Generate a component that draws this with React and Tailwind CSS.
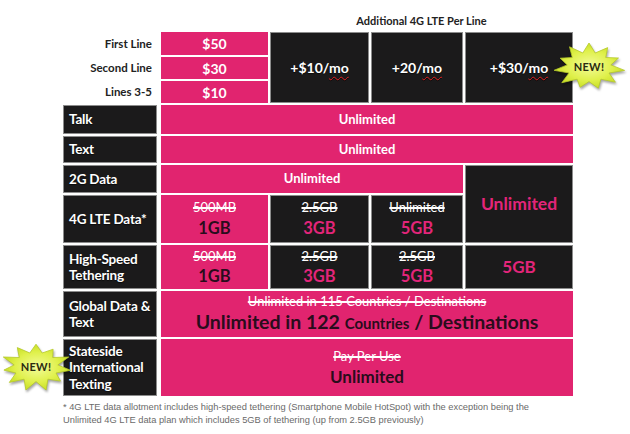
import React from "react";

const PINK = "bg-[#e1246f]";
const BLACK = "bg-[#1b1a1b] border border-[#8c8c8c]";

function starPoints(w, h, n, jit) {
  const cx = w / 2, cy = h / 2;
  const pts = [];
  for (let i = 0; i < n * 2; i++) {
    const a = (Math.PI * i) / n - Math.PI / 2;
    const outer = i % 2 === 0;
    const j = jit[i % jit.length];
    const rx = outer ? (w / 2 - 2) * j : (w / 2) * 0.58;
    const ry = outer ? (h / 2 - 2) * j : (h / 2) * 0.56;
    pts.push(`${(cx + rx * Math.cos(a)).toFixed(1)},${(cy + ry * Math.sin(a)).toFixed(1)}`);
  }
  return pts.join(" ");
}

function Burst({ className, id, jit }) {
  const w = 76, h = 52;
  return (
    <div className={`absolute ${className}`} style={{ width: w, height: h }}>
      <svg width={w} height={h} viewBox={`0 0 ${w} ${h}`} className="absolute inset-0 drop-shadow-[1px_2px_1px_rgba(0,0,0,0.35)]">
        <defs>
          <radialGradient id={id} cx="50%" cy="50%" r="55%">
            <stop offset="0%" stopColor="#f3fb9a" />
            <stop offset="60%" stopColor="#dff04a" />
            <stop offset="100%" stopColor="#c3db1e" />
          </radialGradient>
        </defs>
        <polygon points={starPoints(w, h, 11, jit)} fill={`url(#${id})`} stroke="#b5c92a" strokeWidth="0.8" />
      </svg>
      <div className="absolute inset-0 flex items-center justify-center text-[11px] font-bold text-[#2a2a10] tracking-[0.3px]">
        NEW!
      </div>
    </div>
  );
}

function Strike({ children, className = "" }) {
  return <div className={`line-through decoration-[1.5px] text-white font-normal text-[13px] leading-[15px] ${className}`}>{children}</div>;
}

function Label({ children, row, className = "" }) {
  return (
    <div className={`${BLACK} col-start-1 mr-[2px] flex items-center px-[5px] text-white font-bold text-[13.5px] tracking-[-0.2px] whitespace-nowrap leading-[16.5px] [text-shadow:0_1px_1px_rgba(0,0,0,0.6)] ${row} ${className}`}>
      <div>{children}</div>
    </div>
  );
}

function Mo({ pre }) {
  return (
    <span className="text-white font-bold text-[14px] [text-shadow:0_1px_1px_rgba(0,0,0,0.6)]">
      {pre}/<span className="underline decoration-wavy decoration-[#e02020] decoration-[1px] underline-offset-[3px]">mo</span>
    </span>
  );
}

export default function App() {
  return (
    <div className="relative w-[630px] h-[434px] bg-white overflow-hidden font-['Lato','Liberation_Sans',sans-serif]">
      <div className="pt-[12px] pl-[63px]">
        <div className="grid grid-cols-[96px_107px_99px_92px_108px] grid-rows-[18px_23px_22px_22px_29px_27px_28px_48px_44px_46px_57px] gap-x-[2px] gap-y-[2px]">
          <div className="col-start-3 col-span-3 row-start-1 flex items-center justify-center text-[11px] font-bold text-[#222]">
            Additional 4G LTE Per Line
          </div>

          {["First Line", "Second Line", "Lines 3-5"].map((t, i) => (
            <div
              key={t}
              className={`col-start-1 flex items-center justify-end pr-[7px] text-[11.5px] font-bold text-[#222] ${i === 0 ? "row-start-2" : i === 1 ? "row-start-3" : "row-start-4"}`}
            >
              {t}
            </div>
          ))}
          {["$50", "$30", "$10"].map((t, i) => (
            <div
              key={t}
              className={`${PINK} col-start-2 flex items-center justify-center text-white font-bold text-[14px] ${i === 0 ? "row-start-2" : i === 1 ? "row-start-3" : "row-start-4"}`}
            >
              {t}
            </div>
          ))}
          <div className={`${BLACK} col-start-3 row-start-2 row-span-3 flex items-center justify-center`}>
            <Mo pre="+$10" />
          </div>
          <div className={`${BLACK} col-start-4 row-start-2 row-span-3 flex items-center justify-center`}>
            <Mo pre="+20" />
          </div>
          <div className={`${BLACK} col-start-5 row-start-2 row-span-3 flex items-center justify-center`}>
            <Mo pre="+$30" />
          </div>

          <Label row="row-start-5">Talk</Label>
          <div className={`${PINK} col-start-2 col-span-4 row-start-5 flex items-center justify-center text-white font-bold text-[13px]`}>Unlimited</div>

          <Label row="row-start-6">Text</Label>
          <div className={`${PINK} col-start-2 col-span-4 row-start-6 flex items-center justify-center text-white font-bold text-[13px]`}>Unlimited</div>

          <Label row="row-start-7">2G Data</Label>
          <div className={`${PINK} col-start-2 col-span-3 row-start-7 flex items-center justify-center text-white font-bold text-[13px]`}>Unlimited</div>
          <div className={`${BLACK} col-start-5 row-start-7 row-span-2 flex items-center justify-center text-[#e3257a] font-bold text-[17.5px]`}>Unlimited</div>

          <Label row="row-start-8">4G LTE Data*</Label>
          <div className={`${PINK} col-start-2 row-start-8 flex flex-col items-center justify-center gap-[3px]`}>
            <Strike>500MB</Strike>
            <div className="text-[#2a0c1c] font-bold text-[16.5px] leading-[20px]">1GB</div>
          </div>
          <div className={`${BLACK} col-start-3 row-start-8 flex flex-col items-center justify-center gap-[3px]`}>
            <Strike>2.5GB</Strike>
            <div className="text-[#e3257a] font-bold text-[16.5px] leading-[20px]">3GB</div>
          </div>
          <div className={`${BLACK} col-start-4 row-start-8 flex flex-col items-center justify-center gap-[3px]`}>
            <Strike>Unlimited</Strike>
            <div className="text-[#e3257a] font-bold text-[16.5px] leading-[20px]">5GB</div>
          </div>

          <Label row="row-start-9">High-Speed<br />Tethering</Label>
          <div className={`${PINK} col-start-2 row-start-9 flex flex-col items-center justify-center gap-[2px]`}>
            <Strike>500MB</Strike>
            <div className="text-[#2a0c1c] font-bold text-[16.5px] leading-[20px]">1GB</div>
          </div>
          <div className={`${BLACK} col-start-3 row-start-9 flex flex-col items-center justify-center gap-[2px]`}>
            <Strike>2.5GB</Strike>
            <div className="text-[#e3257a] font-bold text-[16.5px] leading-[20px]">3GB</div>
          </div>
          <div className={`${BLACK} col-start-4 row-start-9 flex flex-col items-center justify-center gap-[2px]`}>
            <Strike>2.5GB</Strike>
            <div className="text-[#e3257a] font-bold text-[16.5px] leading-[20px]">5GB</div>
          </div>
          <div className={`${BLACK} col-start-5 row-start-9 flex items-center justify-center text-[#e3257a] font-bold text-[17px]`}>5GB</div>

          <Label row="row-start-10">Global Data &amp;<br />Text</Label>
          <div className={`${PINK} col-start-2 col-span-4 row-start-10 flex flex-col items-center justify-center gap-[1px]`}>
            <Strike className="text-[13.5px]">Unlimited in 115 Countries / Destinations</Strike>
            <div className="text-[#2a0c1c] font-bold text-[19.5px] leading-[24px]">
              Unlimited in 122 <span className="text-[15px]">Countries</span> / Destinations
            </div>
          </div>

          <Label row="row-start-11">Stateside<br />International<br />Texting</Label>
          <div className={`${PINK} col-start-2 col-span-4 row-start-11 flex flex-col items-center justify-center gap-[3px]`}>
            <Strike>Pay Per Use</Strike>
            <div className="text-[#2a0c1c] font-bold text-[17px] leading-[19px]">Unlimited</div>
          </div>
        </div>

        <div className="mt-[5px] text-[9.3px] leading-[13px] text-[#6a6a6a] font-['Liberation_Sans',sans-serif] whitespace-nowrap">
          <div>* 4G LTE data allotment includes high-speed tethering (Smartphone Mobile HotSpot) with the exception being the</div>
          <div>Unlimited 4G LTE data plan which includes 5GB of tethering (up from 2.5GB previously)</div>
        </div>
      </div>

      <Burst className="left-[551px] top-[41px]" id="b1" jit={[1, 0.88, 0.96, 1, 0.9, 0.98, 1, 0.88, 0.97, 1, 0.92]} />
      <Burst className="left-[-2px] top-[341px]" id="b2" jit={[0.95, 1, 0.88, 0.98, 1, 0.9, 0.97, 1, 0.9, 0.96, 1]} />
    </div>
  );
}
